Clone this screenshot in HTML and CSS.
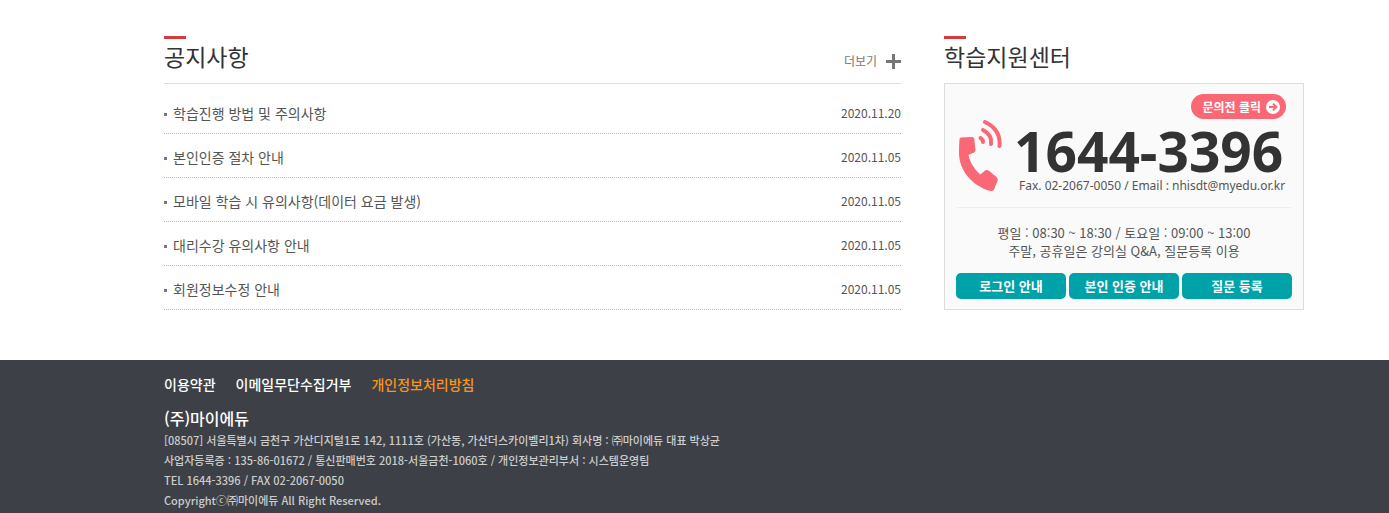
FILE: index.html
```
<!DOCTYPE html>
<html lang="ko">
<head>
<meta charset="utf-8">
<title>마이에듀</title>
<link rel="stylesheet" href="styles.css">
</head>
<body>
<main class="main">
  <section class="notice">
    <div class="tit_area">
      <h2 class="tit">공지사항</h2>
      <a href="#" class="more">더보기
        <svg width="15" height="15" viewBox="0 0 15 15" aria-hidden="true"><path d="M6 0h3v6h6v3H9v6H6V9H0V6h6z" fill="#777"/></svg>
      </a>
    </div>
    <ul class="notice_list">
      <li><a href="#">학습진행 방법 및 주의사항</a><span class="date">2020.11.20</span></li>
      <li><a href="#">본인인증 절차 안내</a><span class="date">2020.11.05</span></li>
      <li><a href="#">모바일 학습 시 유의사항(데이터 요금 발생)</a><span class="date">2020.11.05</span></li>
      <li><a href="#">대리수강 유의사항 안내</a><span class="date">2020.11.05</span></li>
      <li><a href="#">회원정보수정 안내</a><span class="date">2020.11.05</span></li>
    </ul>
  </section>

  <section class="center">
    <h2 class="tit">학습지원센터</h2>
    <div class="center_box">
      <a href="#" class="btn_ask">문의전 클릭
        <svg width="14" height="14" viewBox="0 0 14 14" aria-hidden="true"><circle cx="7" cy="7" r="7" fill="#fff"/><path d="M3 7h7M7 3.600L10.400 7 7 10.400" fill="none" stroke="#fa6775" stroke-width="2"/></svg>
      </a>
      <div class="tel_area">
        <svg class="ico_tel" width="44" height="73" viewBox="0 0 44 73" aria-hidden="true">
          <path d="M3 18.500L14 18Q16 18 16.300 20L17.500 31Q17.600 33 16 33.500L10.500 36C12 44 17 51 22.500 55.500L27 51.500Q28.500 50.500 30.500 51.500L38.500 58Q40.500 60 39.500 62L36 70.500Q35 72.500 32.500 72C14 67 1 51 1 34Q1 26 1.500 20Q1.700 18.600 3 18.500z" fill="#fa6775"/>
          <g fill="none" stroke="#fa6775" stroke-width="4" stroke-linecap="round"><path d="M22.500 19q2.500 1.500 2.500 4"/><path d="M25 11q9.500 5 8 14"/><path d="M27 3q16 7.500 14.500 24"/></g>
        </svg>
        <div class="tel">
          <strong>1644-3396</strong>
          <p>Fax. 02-2067-0050 / Email : nhisdt@myedu.or.kr</p>
        </div>
      </div>
      <p class="time">평일 : 08:30 ~ 18:30 / 토요일 : 09:00 ~ 13:00<br>주말, 공휴일은 강의실 Q&amp;A, 질문등록 이용</p>
      <div class="btns">
        <a href="#">로그인 안내</a>
        <a href="#">본인 인증 안내</a>
        <a href="#">질문 등록</a>
      </div>
    </div>
  </section>
</main>

<footer class="footer">
  <ul class="foot_menu">
    <li><a href="#">이용약관</a></li>
    <li><a href="#">이메일무단수집거부</a></li>
    <li><a href="#" class="point">개인정보처리방침</a></li>
  </ul>
  <h3>(주)마이에듀</h3>
  <address>
    [08507] 서울특별시 금천구 가산디지털1로 142, 1111호 (가산동, 가산더스카이벨리1차) 회사명 : ㈜마이에듀 대표 박상균<br>
    사업자등록증 : 135-86-01672 / 통신판매번호 2018-서울금천-1060호 / 개인정보관리부서 : 시스템운영팀<br>
    TEL 1644-3396 / FAX 02-2067-0050<br>
    Copyrightⓒ㈜마이에듀 All Right Reserved.
  </address>
</footer>
</body>
</html>
```
FILE: styles.css
```
* {margin: 0; padding: 0; box-sizing: border-box;}
body {font-family: "Noto Sans CJK KR", sans-serif; font-size: 14px; color: #555; background: #fff;}
ul {list-style: none;}
a {color: inherit; text-decoration: none;}

.main {display: flex; gap: 43px; padding: 36px 85px 50px 164px;}
.tit {font-size: 23px; font-weight: 400; line-height: 34px; color: #333;}
.tit:before {content: ""; display: block; width: 22px; height: 3px; background: #d93a3f;}

/* 공지사항 */
.notice {flex: 1; min-width: 0;}
.tit_area {display: flex; justify-content: space-between; align-items: flex-end; height: 48px; border-bottom: 1px solid #ddd;}
.tit_area .tit {align-self: flex-start;}
.more {display: flex; align-items: center; gap: 9px; margin-bottom: 12px; font-size: 12px; line-height: 20px; color: #777;}
.notice_list {padding-top: 6px;}
.notice_list li {display: flex; align-items: center; height: 44px; padding-top: 2px; border-bottom: 1px dotted #bbb;}
.notice_list li:before {content: ""; width: 3px; height: 3px; margin: 4px 6px 0 0; background: #777;}
.notice_list .date {margin-left: auto; font-size: 12px;}

/* 학습지원센터 */
.center {width: 360px;}
.center_box {display: flex; flex-direction: column; margin-top: 10px; padding: 10px 11px; border: 1px solid #ddd; background: #fafafa;}
.btn_ask {display: flex; align-items: center; gap: 5px; align-self: flex-end; height: 25px; margin-right: 6px; padding: 0 6px 0 11px; border-radius: 13px; background: #fa6775; font-size: 12px; font-weight: 700; color: #fff;}
.tel_area {display: flex; gap: 12px; height: 89px; padding-left: 2px; border-bottom: 1px solid #eee;}
.ico_tel {flex: none;}
.tel {padding-top: 9px; font-family: "Noto Sans", sans-serif; white-space: nowrap;}
.tel strong {display: block; font-size: 55px; line-height: 46px; color: #333;}
.tel p {padding-left: 5px; font-size: 12px; line-height: 24px;}
.time {padding: 16px 0 13px; font-size: 13px; line-height: 18px; text-align: center;}
.btns {display: flex; gap: 3px;}
.btns a {flex: 1; border-radius: 5px; background: #00a2a9; font-size: 13px; font-weight: 700; line-height: 26px; text-align: center; color: #fff;}

/* 하단 */
.footer {padding: 14px 85px 3px 164px; background: #3d4147; color: #ccc;}
.foot_menu {display: flex; gap: 20px; font-weight: 500; line-height: 20px; color: #fff;}
.foot_menu .point {color: #f7941d;}
.footer h3 {padding-top: 12px; font-size: 16px; font-weight: 500; line-height: 24px; color: #fff;}
.footer address {font-size: 11px; font-weight: 500; font-style: normal; line-height: 20px;}
```
